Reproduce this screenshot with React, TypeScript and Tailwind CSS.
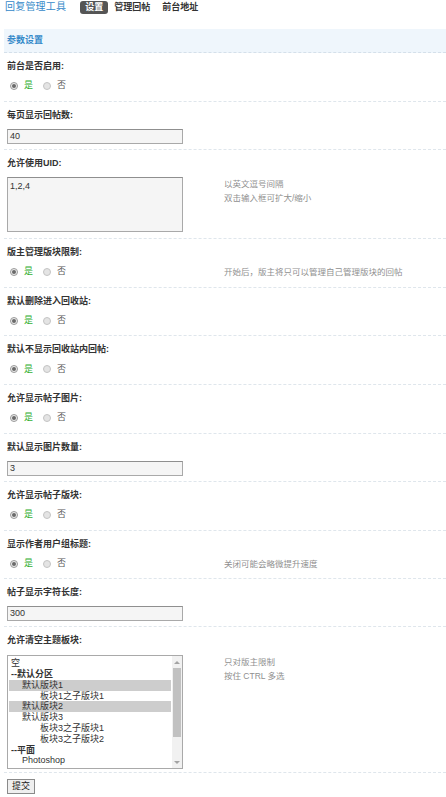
type Field =
  | { kind: 'radio'; label: string; hint?: string[] }
  | { kind: 'input'; label: string; value: string }
  | { kind: 'textarea'; label: string; value: string; hint?: string[] }
  | { kind: 'select'; label: string; hint?: string[] };

type ForumOption = {
  text: string;
  indent: 0 | 1 | 2;
  group?: boolean;
  selected?: boolean;
};

const fields: Field[] = [
  { kind: 'radio', label: '前台是否启用:' },
  { kind: 'input', label: '每页显示回帖数:', value: '40' },
  {
    kind: 'textarea',
    label: '允许使用UID:',
    value: '1,2,4',
    hint: ['以英文逗号间隔', '双击输入框可扩大/缩小'],
  },
  { kind: 'radio', label: '版主管理版块限制:', hint: ['开始后，版主将只可以管理自己管理版块的回帖'] },
  { kind: 'radio', label: '默认删除进入回收站:' },
  { kind: 'radio', label: '默认不显示回收站内回帖:' },
  { kind: 'radio', label: '允许显示帖子图片:' },
  { kind: 'input', label: '默认显示图片数量:', value: '3' },
  { kind: 'radio', label: '允许显示帖子版块:' },
  { kind: 'radio', label: '显示作者用户组标题:', hint: ['关闭可能会略微提升速度'] },
  { kind: 'input', label: '帖子显示字符长度:', value: '300' },
  { kind: 'select', label: '允许清空主题板块:', hint: ['只对版主限制', '按住 CTRL 多选'] },
];

const forumOptions: ForumOption[] = [
  { text: '空', indent: 0 },
  { text: '--默认分区', indent: 0, group: true },
  { text: '默认版块1', indent: 1, selected: true },
  { text: '板块1之子版块1', indent: 2 },
  { text: '默认版块2', indent: 1, selected: true },
  { text: '默认版块3', indent: 1 },
  { text: '板块3之子版块1', indent: 2 },
  { text: '板块3之子版块2', indent: 2 },
  { text: '--平面', indent: 0, group: true },
  { text: 'Photoshop', indent: 1 },
];

function indentClass(indent: ForumOption['indent']): string {
  if (indent === 1) return 'pl-[13px]';
  if (indent === 2) return 'pl-[31px]';
  return 'pl-[2px]';
}

function Radio({ checked }: { checked: boolean }) {
  return (
    <span
      className={`flex h-[8px] w-[8px] items-center justify-center rounded-full border ${
        checked ? 'border-[#9a9a9a] bg-[#ececec]' : 'border-[#c4c4c4] bg-[#e4e4e4]'
      }`}
    >
      {checked ? <span className="h-[4px] w-[4px] rounded-full bg-[#6a6a6a]" /> : null}
    </span>
  );
}

function Hint({ lines }: { lines?: string[] }) {
  if (!lines) return null;
  return (
    <div className="text-[8.5px] leading-[14px] text-[#8f8f8f]">
      {lines.map((line) => (
        <p key={line}>{line}</p>
      ))}
    </div>
  );
}

function ForumSelect() {
  return (
    <div className="flex h-[114px] w-[176px] border border-[#a9a9a9] bg-white">
      <div className="flex-1 overflow-hidden pt-[2px] text-[9px] leading-[10.8px] text-[#333]">
        {forumOptions.map((option) => (
          <div
            key={option.text}
            className={`ml-[1px] mr-[1px] whitespace-nowrap ${indentClass(option.indent)} ${
              option.selected ? 'bg-[#cdcdcd]' : ''
            } ${option.group ? 'font-bold' : ''}`}
          >
            {option.text}
          </div>
        ))}
      </div>
      {/* scrollbar: arrows, thumb, track */}
      <div className="flex w-[10px] flex-col items-center bg-[#f1f1f1]">
        <div className="flex h-[12px] items-center">
          <span className="h-0 w-0 border-x-[3px] border-b-[3px] border-x-transparent border-b-[#a3a3a3]" />
        </div>
        <div className="h-[69px] w-[8px] bg-[#c1c1c1]" />
        <div className="flex-1" />
        <div className="flex h-[12px] items-center">
          <span className="h-0 w-0 border-x-[3px] border-t-[3px] border-x-transparent border-t-[#a3a3a3]" />
        </div>
      </div>
    </div>
  );
}

function FieldRow({ field }: { field: Field }) {
  const pad =
    field.kind === 'radio'
      ? 'pb-[7.75px]'
      : field.kind === 'input'
        ? 'pb-[5px]'
        : field.kind === 'textarea'
          ? 'pb-[6px]'
          : 'pb-[3px]';

  return (
    <div className={`border-b border-dashed border-[#dfe6ec] pl-[3px] pt-[5px] ${pad}`}>
      <div className="text-[9px] font-bold leading-[16px] text-[#333]">{field.label}</div>
      {field.kind === 'radio' ? (
        <div className="mt-[5px] flex items-start">
          <div className="flex h-[14px] w-[217px] items-center pl-[3px] text-[9px]">
            <Radio checked />
            <span className="ml-[6px] text-[#2fae2f]">是</span>
            <span className="ml-[10px]">
              <Radio checked={false} />
            </span>
            <span className="ml-[6px] text-[#555]">否</span>
          </div>
          <Hint lines={field.hint} />
        </div>
      ) : field.kind === 'input' ? (
        <div className="mt-[6px] flex h-[15px] w-[176px] items-center border border-[#a9a9a9] border-t-[#8f8f8f] bg-[#f5f5f5] px-[2px] text-[9px] text-[#333]">
          {field.value}
        </div>
      ) : field.kind === 'textarea' ? (
        <div className="mt-[6px] flex items-start">
          <div className="w-[217px]">
            <div className="h-[55px] w-[176px] border border-[#a9a9a9] border-t-[#8f8f8f] bg-[#f5f5f5] px-[2px] pt-[2px] text-[9px] leading-[12px] text-[#333]">
              {field.value}
            </div>
          </div>
          <Hint lines={field.hint} />
        </div>
      ) : (
        <div className="mt-[7px] flex items-start">
          <div className="w-[217px]">
            <ForumSelect />
          </div>
          <Hint lines={field.hint} />
        </div>
      )}
    </div>
  );
}

export default function App() {
  return (
    <div className="min-h-[797px] w-[446px] bg-white font-['Liberation_Sans','Noto_Sans_CJK_SC',sans-serif] text-[#333]">
      <header className="flex h-[14px] items-center pl-[5px]">
        <span className="text-[10px] leading-[14px] tracking-[0.2px] text-[#3589c9]">回复管理工具</span>
        <span className="ml-[14px] rounded-[3px] bg-[#555] px-[5px] text-[9px] font-bold leading-[13px] text-white">
          设置
        </span>
        <span className="ml-[6px] text-[9px] font-bold leading-[13px] text-[#333]">管理回帖</span>
        <span className="ml-[12px] text-[9px] font-bold leading-[13px] text-[#333]">前台地址</span>
      </header>

      <div className="ml-[4px] mt-[15px]">
        <div className="h-[24px] border-b border-dashed border-[#d5e0ea] bg-[#eff6fc] pl-[3px] text-[9px] font-bold leading-[23px] text-[#3589c9]">
          参数设置
        </div>

        {fields.map((field) => (
          <FieldRow key={field.label} field={field} />
        ))}

        <div className="flex pl-[3px] pt-[6px]">
          <button
            type="button"
            className="h-[15px] border border-[#8a8a8a] bg-[#efefef] px-[4px] text-[9px] leading-[13px] text-[#222]"
          >
            提交
          </button>
        </div>
      </div>
    </div>
  );
}
